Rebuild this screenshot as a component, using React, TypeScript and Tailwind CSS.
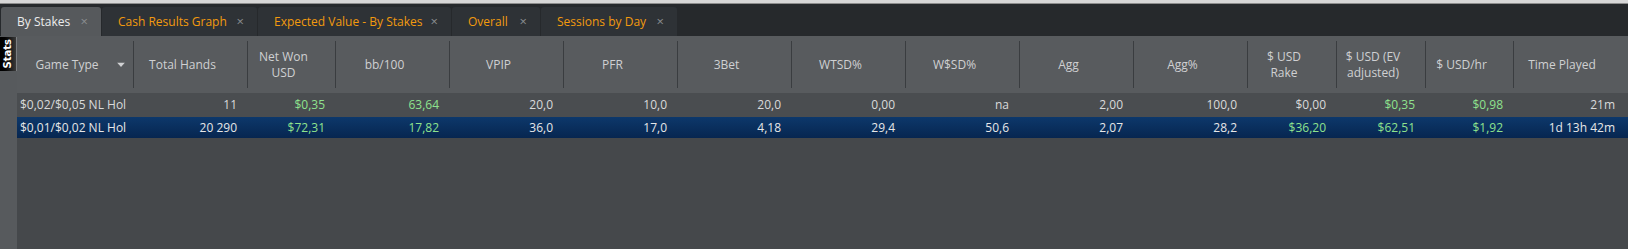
import React from "react";

type Col = { label: string[]; w: string; caret?: boolean };

const cols: Col[] = [
  { label: ["Game Type"], w: "w-[117px]", caret: true },
  { label: ["Total Hands"], w: "w-[114px]" },
  { label: ["Net Won", "USD"], w: "w-[88px]" },
  { label: ["bb/100"], w: "w-[114px]" },
  { label: ["VPIP"], w: "w-[114px]" },
  { label: ["PFR"], w: "w-[114px]" },
  { label: ["3Bet"], w: "w-[114px]" },
  { label: ["WTSD%"], w: "w-[114px]" },
  { label: ["W$SD%"], w: "w-[114px]" },
  { label: ["Agg"], w: "w-[114px]" },
  { label: ["Agg%"], w: "w-[114px]" },
  { label: ["$ USD", "Rake"], w: "w-[89px]" },
  { label: ["$ USD (EV", "adjusted)"], w: "w-[89px]" },
  { label: ["$ USD/hr"], w: "w-[88px]" },
  { label: ["Time Played"], w: "w-[112px]" },
];

// g = green money value
const rows: { v: string; g?: boolean }[][] = [
  [
    { v: "$0,02/$0,05 NL Hol" },
    { v: "11" },
    { v: "$0,35", g: true },
    { v: "63,64", g: true },
    { v: "20,0" },
    { v: "10,0" },
    { v: "20,0" },
    { v: "0,00" },
    { v: "na" },
    { v: "2,00" },
    { v: "100,0" },
    { v: "$0,00" },
    { v: "$0,35", g: true },
    { v: "$0,98", g: true },
    { v: "21m" },
  ],
  [
    { v: "$0,01/$0,02 NL Hol" },
    { v: "20 290" },
    { v: "$72,31", g: true },
    { v: "17,82", g: true },
    { v: "36,0" },
    { v: "17,0" },
    { v: "4,18" },
    { v: "29,4" },
    { v: "50,6" },
    { v: "2,07" },
    { v: "28,2" },
    { v: "$36,20", g: true },
    { v: "$62,51", g: true },
    { v: "$1,92", g: true },
    { v: "1d 13h 42m" },
  ],
];

const tabs = [
  { label: "By Stakes", active: true, w: "w-[100px]" },
  { label: "Cash Results Graph", w: "w-[155px]" },
  { label: "Expected Value - By Stakes", w: "w-[193px]" },
  { label: "Overall", w: "w-[88px]" },
  { label: "Sessions by Day", w: "w-[136px]" },
];

export default function App() {
  return (
    <div className="w-[1628px] h-[249px] flex flex-col overflow-hidden bg-[#45484b] font-['Open_Sans',sans-serif] text-[12px]">
      {/* clipped window strip above */}
      <div className="h-[4px] shrink-0 bg-[#d7d7d7] border-b border-[#8d8d8d]" />

      {/* Tabs */}
      <div className="h-[32px] shrink-0 bg-[#26292c] flex items-end pl-px gap-px">
        {tabs.map((t) => (
          <div
            key={t.label}
            className={`${t.w} h-[29px] shrink-0 flex items-center pl-[16px] pr-[13px] rounded-t-[3px] ${
              t.active ? "bg-[#56595c] text-[#ececec]" : "bg-[#2e3236] text-[#f29a0e]"
            }`}
          >
            <span className="flex-1 whitespace-nowrap">{t.label}</span>
            <span className="text-[#8a8d90] text-[13px] leading-none">×</span>
          </div>
        ))}
      </div>

      <div className="flex flex-1 min-h-0">
        {/* Side rail */}
        <div className="w-[17px] shrink-0 bg-[#575a5d] pt-px">
          <div className="w-[17px] h-[34px] bg-gradient-to-r from-[#000] via-[#111] to-[#3a3a3a] border-r border-[#7b7e81] flex items-center justify-center">
            <span className="[writing-mode:vertical-rl] rotate-180 text-white font-bold text-[10px] leading-none font-['DejaVu_Sans',sans-serif]">
              Stats
            </span>
          </div>
        </div>

        <div className="flex-1 flex flex-col">
          {/* Header */}
          <div className="h-[57px] shrink-0 flex bg-[#585b5e] text-[#cfd0d2]">
            {cols.map((c, i) => (
              <div key={i} className={`${c.w} shrink-0 py-[5px]`}>
                <div
                  className={`relative h-full flex items-center justify-center pr-[16px] leading-[16px] text-center ${
                    i < cols.length - 1 ? "border-r border-[#3a3d40]" : ""
                  }`}
                >
                  <div>
                    {c.label.map((l) => (
                      <div key={l} className="whitespace-nowrap">
                        {l}
                      </div>
                    ))}
                  </div>
                  {c.caret && (
                    <svg className="absolute right-[8px] top-1/2 -translate-y-1/2" width="8" height="5" viewBox="0 0 8 5">
                      <path d="M0 0h8L4 4.5z" fill="#d0d1d3" />
                    </svg>
                  )}
                </div>
              </div>
            ))}
          </div>

          {/* Rows */}
          {rows.map((r, ri) => (
            <div
              key={ri}
              className={`flex shrink-0 ${
                ri === 0
                  ? "h-[24px] bg-[#4a4d50] text-[#d9dadb]"
                  : "h-[21px] bg-gradient-to-b from-[#0d386b] to-[#072650] text-[#e6e7e8]"
              }`}
            >
              {r.map((c, ci) => (
                <div
                  key={ci}
                  className={`${cols[ci].w} shrink-0 flex items-center overflow-hidden whitespace-nowrap ${
                    ci === 0 ? "pl-[3px]" : "justify-end pr-[11px]"
                  } ${c.g ? "text-[#8ee28e]" : ""}`}
                >
                  {c.v}
                </div>
              ))}
            </div>
          ))}

          <div className="flex-1 bg-[#45484b]" />
        </div>
      </div>
    </div>
  );
}
